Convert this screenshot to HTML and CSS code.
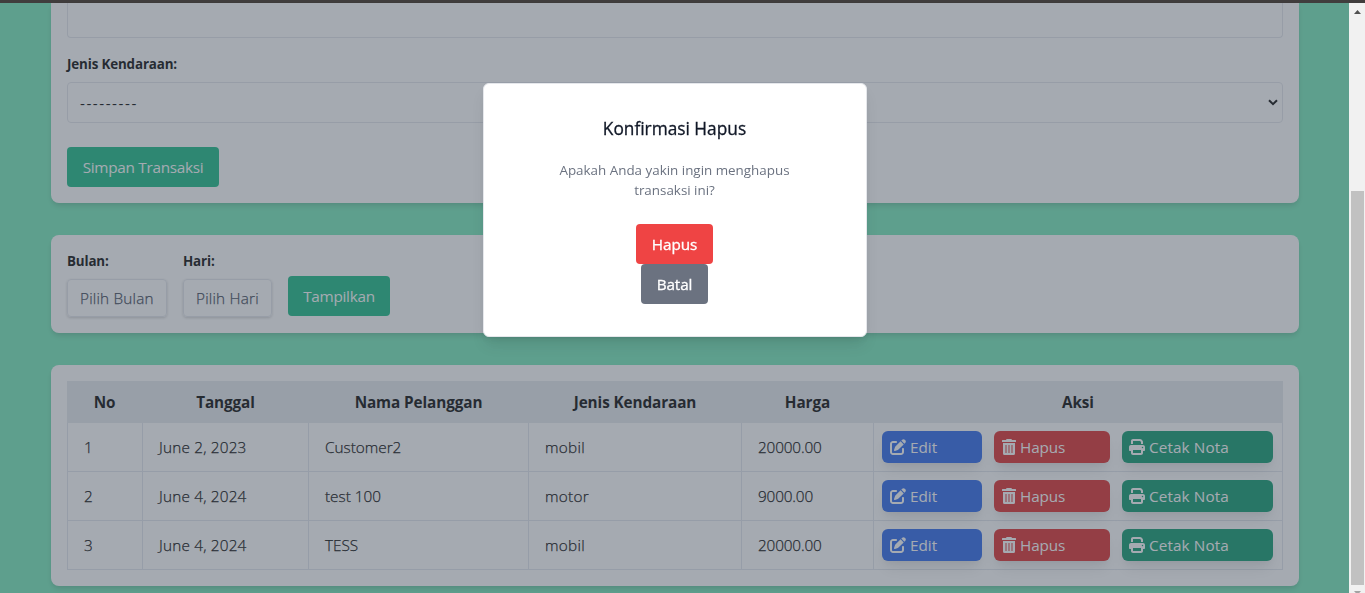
FILE: index.html
```html
<!DOCTYPE html>
<html lang="id">
<head>
<meta charset="utf-8">
<title>Transaksi</title>
<link rel="stylesheet" href="styles.css">
</head>
<body>
<svg class="defs" aria-hidden="true">
  <symbol id="edit" viewBox="0 0 512 512"><path d="M471.6 21.7c-21.9-21.9-57.3-21.9-79.2 0L362.3 51.7l97.9 97.9 30.1-30.1c21.9-21.9 21.9-57.3 0-79.2L471.6 21.7zm-299.2 220c-6.1 6.1-10.8 13.6-13.5 21.9l-29.6 88.8c-2.9 8.6-.6 18.1 5.8 24.6s15.9 8.7 24.6 5.8l88.8-29.6c8.2-2.7 15.7-7.4 21.9-13.5L437.7 172.3 339.7 74.3 172.4 241.7zM96 64C43 64 0 107 0 160V416c0 53 43 96 96 96H352c53 0 96-43 96-96V320c0-17.7-14.3-32-32-32s-32 14.3-32 32v96c0 17.7-14.3 32-32 32H96c-17.7 0-32-14.3-32-32V160c0-17.7 14.3-32 32-32h96c17.7 0 32-14.3 32-32s-14.3-32-32-32H96z"/></symbol>
  <symbol id="trash" viewBox="0 0 14 16"><path fill-rule="evenodd" d="M4 1 4.600 0h4.800L10 1h3.500a.5.5 0 0 1 .5.5V3H0V1.500A.5.5 0 0 1 .5 1zM1 4h12v10.500a1.500 1.500 0 0 1-1.500 1.500h-9A1.500 1.500 0 0 1 1 14.500zM3.500 6v8h1V6zm3 0v8h1V6zm3 0v8h1V6z"/></symbol>
  <symbol id="print" viewBox="0 0 512 512"><path d="M128 0C92.700 0 64 28.700 64 64v96h64V64H354.700L384 93.300V160h64V93.300c0-17-6.700-33.300-18.700-45.300L400 18.700C388 6.700 371.700 0 354.700 0H128zM384 352v32 64H128V384 368 352H384zm64 32h32c17.700 0 32-14.300 32-32V256c0-35.300-28.700-64-64-64H64c-35.300 0-64 28.700-64 64v96c0 17.700 14.300 32 32 32H64v64c0 35.300 28.700 64 64 64H384c35.300 0 64-28.700 64-64V384zM432 248a24 24 0 1 1 0 48 24 24 0 1 1 0-48z"/></symbol>
</svg>
<div class="window-edge"></div>
<div class="viewport">
  <main class="page">
    <section class="card form-card">
      <div class="field name-field"></div>
      <label class="label">Jenis Kendaraan:</label>
      <div class="field select"><span>---------</span>
        <svg class="chevron" viewBox="0 0 10 7"><path d="M1 1.200 5 5.200 9 1.200"/></svg>
      </div>
      <button class="btn primary save">Simpan Transaksi</button>
    </section>

    <section class="card filter-card">
      <div class="filter month"><label class="label">Bulan:</label><div class="picker">Pilih Bulan</div></div>
      <div class="filter day"><label class="label">Hari:</label><div class="picker">Pilih Hari</div></div>
      <button class="btn primary show">Tampilkan</button>
    </section>

    <section class="card table-card">
      <table class="table">
        <colgroup><col class="c-no"><col class="c-date"><col class="c-name"><col class="c-type"><col class="c-price"><col class="c-action"></colgroup>
        <thead><tr><th>No</th><th>Tanggal</th><th>Nama Pelanggan</th><th>Jenis Kendaraan</th><th>Harga</th><th>Aksi</th></tr></thead>
        <tbody>
          <tr><td>1</td><td class="date">June 2, 2023</td><td>Customer2</td><td class="type">mobil</td><td class="price">20000.00</td><td class="actions-cell"><div class="actions"><a class="action edit"><svg><use href="#edit"/></svg>Edit</a><a class="action delete"><svg><use href="#trash"/></svg>Hapus</a><a class="action print"><svg><use href="#print"/></svg>Cetak Nota</a></div></td></tr>
          <tr><td>2</td><td class="date">June 4, 2024</td><td>test 100</td><td class="type">motor</td><td class="price">9000.00</td><td class="actions-cell"><div class="actions"><a class="action edit"><svg><use href="#edit"/></svg>Edit</a><a class="action delete"><svg><use href="#trash"/></svg>Hapus</a><a class="action print"><svg><use href="#print"/></svg>Cetak Nota</a></div></td></tr>
          <tr><td>3</td><td class="date">June 4, 2024</td><td>TESS</td><td class="type">mobil</td><td class="price">20000.00</td><td class="actions-cell"><div class="actions"><a class="action edit"><svg><use href="#edit"/></svg>Edit</a><a class="action delete"><svg><use href="#trash"/></svg>Hapus</a><a class="action print"><svg><use href="#print"/></svg>Cetak Nota</a></div></td></tr>
        </tbody>
      </table>
    </section>
  </main>
  <div class="scrollbar">
    <svg class="arrow" viewBox="0 0 7 4"><path d="M0 4 3.500 0 7 4z"/></svg>
    <div class="thumb"></div>
    <svg class="arrow down" viewBox="0 0 7 4"><path d="M0 0h7L3.500 4z"/></svg>
  </div>
</div>
<div class="overlay">
  <div class="modal">
    <h3 class="modal-title">Konfirmasi Hapus</h3>
    <p class="modal-text">Apakah Anda yakin ingin menghapus transaksi ini?</p>
    <button class="btn danger">Hapus</button>
    <button class="btn cancel">Batal</button>
  </div>
</div>
</body>
</html>
```
FILE: styles.css
```css
* { box-sizing: border-box; }
body {
  margin: 0;
  height: 593px;
  overflow: hidden;
  font: 400 15.3px/24px "Open Sans", "Noto Sans", sans-serif;
  color: #000;
}
.defs { position: absolute; width: 0; height: 0; }
.window-edge { height: 3px; background: #403d3d; }
.viewport { display: flex; height: 590px; }
.page {
  flex: 1;
  min-width: 0;
  display: flex;
  flex-direction: column;
  gap: 32px;
  padding: 0 50px 0 51px;
  background: #71e9b7;
}
.card {
  flex: none;
  padding: 16px;
  border-radius: 8px;
  background: #fff;
  box-shadow: 0 4px 6px -1px rgba(0,0,0,.12), 0 2px 4px -1px rgba(0,0,0,.08);
}
.form-card { height: 200px; padding-top: 0; border-radius: 0 0 8px 8px; }
.label { display: block; font-size: 13.400px; font-weight: 700; line-height: 20px; letter-spacing: -.15px; }
.field { border: 1px solid #e2e5ea; border-radius: 4px; }
.name-field { height: 35px; border-top: 0; border-radius: 0 0 4px 4px; margin-bottom: 16px; }
.select {
  display: flex;
  align-items: center;
  justify-content: space-between;
  height: 41px;
  margin-top: 8px;
  padding: 0 4px 0 12px;
  letter-spacing: 1.500px;
}
.chevron { width: 10px; height: 7px; fill: none; stroke: #000; stroke-width: 2; }
.btn {
  height: 40px;
  padding: 0;
  border: 0;
  border-radius: 4px;
  font: inherit;
  color: #fff;
}
.primary { background: #10b981; letter-spacing: -.28px; }
.save { display: block; width: 152px; margin-top: 24px; }
.filter-card { display: flex; height: 98px; }
.month { width: 100px; margin-right: 16px; }
.day { width: 89px; margin-right: 16px; }
.picker {
  height: 38px;
  margin-top: 8px;
  padding-left: 12px;
  border: 1px solid #e2e5ea;
  border-radius: 4px;
  box-shadow: 0 1px 3px rgba(0,0,0,.2);
  color: #374151;
  font-weight: 300;
  -webkit-text-stroke: .25px;
  letter-spacing: .2px;
  line-height: 36px;
  white-space: nowrap;
}
.show { width: 102px; margin-top: 25px; }
.table-card { height: 221px; }
.table { width: 1216px; table-layout: fixed; border-collapse: separate; border-spacing: 0; }
.c-no { width: 76px; }
.c-date { width: 166px; }
.c-name { width: 220px; }
.c-type { width: 213px; }
.c-price { width: 132px; }
.c-action { width: 409px; }
.table th { height: 42px; padding: 0 1px 0 0; background: #e5e9ed; font-weight: 700; letter-spacing: -.1px; }
.table td {
  height: 49px;
  padding: 0 16px;
  border: 0 solid #e1e5ec;
  border-width: 0 1px 1px 0;
  font-weight: 300;
  -webkit-text-stroke: .25px;
}
.table td:first-child { border-left-width: 1px; }
.table td.date { letter-spacing: .2px; }
.table td.type { letter-spacing: .3px; }
.table td.price { letter-spacing: -.15px; }
.table td.actions-cell { padding: 0 8px; }
.actions { display: flex; gap: 12px; }
.action {
  display: flex;
  align-items: center;
  gap: 4px;
  height: 32px;
  padding: 0 8px;
  border-radius: 6px;
  color: #fff;
  font-weight: 400;
  -webkit-text-stroke: 0;
  box-shadow: 0 10px 15px -3px rgba(0,0,0,.1), 0 4px 6px -2px rgba(0,0,0,.05);
}
.action svg { width: 16px; height: 16px; fill: currentColor; }
.edit { width: 100px; background: #2563eb; }
.delete { width: 116px; background: #dc2626; letter-spacing: -.15px; }
.delete svg { width: 14px; }
.print { width: 151px; padding-left: 7px; background: #059669; letter-spacing: .1px; }
.scrollbar {
  flex: none;
  display: flex;
  flex-direction: column;
  align-items: center;
  width: 16px;
  background: #f1f1f1;
}
.arrow { flex: none; width: 7px; height: 4px; margin-top: 7px; fill: #505050; }
.thumb { flex: none; width: 13px; height: 394px; margin-top: 177px; background: #c1c1c1; }
.arrow.down { margin-top: 6px; fill: #a3a3a3; }
.overlay {
  position: fixed;
  inset: 3px 16px 0 0;
  padding-top: 80px;
  background: rgba(75,85,99,.5);
}
.modal {
  display: flex;
  flex-direction: column;
  align-items: center;
  width: 384px;
  height: 254px;
  margin: 0 auto;
  padding-top: 33px;
  border: 1px solid #e5e7eb;
  border-radius: 6px;
  background: #fff;
  box-shadow: 0 10px 15px -3px rgba(0,0,0,.1), 0 4px 6px -2px rgba(0,0,0,.05);
}
.modal-title { margin: 0; font-size: 17.300px; font-weight: 400; line-height: 24px; color: #111827; -webkit-text-stroke: .3px; }
.modal-text { width: 260px; margin: 19px 0 24px; font-size: 13.400px; line-height: 20px; text-align: center; color: #6b7280; }
.danger, .cancel { font-weight: 400; -webkit-text-stroke: .3px; letter-spacing: -.1px; }
.danger { width: 77px; background: #ef4444; }
.cancel { width: 67px; background: #6b7280; }
```
